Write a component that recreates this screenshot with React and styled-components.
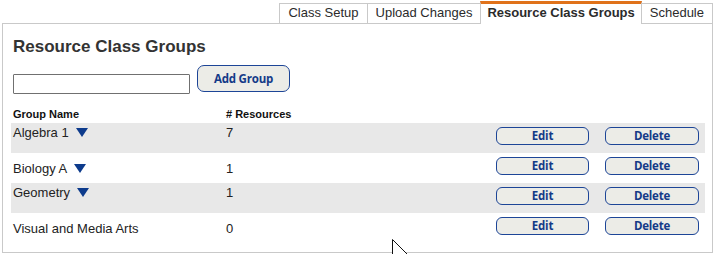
import React from "react";
import styled, { createGlobalStyle } from "styled-components";

const Global = createGlobalStyle`
  html, body { margin: 0; padding: 0; background: #fff; }
  body { font-family: "Liberation Sans", Arial, sans-serif; color: #222; }
  * { box-sizing: border-box; }
`;

const Page = styled.div`
  position: relative;
  width: 717px;
  height: 254px;
  overflow: hidden;
  padding: 1px 4px 0 2px;
`;

const TabBar = styled.div`
  display: flex;
  justify-content: flex-end;
  align-items: flex-end;
  height: 23px;
  margin-bottom: -1px;
  position: relative;
  z-index: 1;
`;

const Tab = styled.div`
  height: ${(p) => (p.$active ? "23px" : "21px")};
  margin-left: -1px;
  padding: 0 ${(p) => (p.$active ? "6px" : "8px")};
  border: 1px solid #c9c9c9;
  border-top: ${(p) => (p.$active ? "3px solid #e0721a" : "1px solid #c9c9c9")};
  border-bottom: ${(p) => (p.$active ? "none" : "1px solid #c9c9c9")};
  background: #fff;
  font-size: 13px;
  font-weight: ${(p) => (p.$active ? 700 : 400)};
  color: #2b2b2b;
  line-height: ${(p) => (p.$active ? "17px" : "18px")};
  white-space: nowrap;
`;

const Panel = styled.div`
  border: 1px solid #c9c9c9;
  height: 230px;
  padding: 13px 7px 0 8px;
`;

const Heading = styled.h2`
  margin: 0 0 0 2px;
  font-size: 17px;
  line-height: 20px;
  font-weight: 700;
  color: #333;
`;

const AddRow = styled.div`
  display: flex;
  align-items: flex-start;
  margin-top: 8px;
  height: 29px;
`;

const TextInput = styled.input`
  width: 177px;
  height: 20px;
  margin: 9px 0 0 2px;
  border: 1px solid #707070;
  border-radius: 1px;
  background: #fff;
  padding: 0 3px;
  font: 13px "Liberation Sans", Arial, sans-serif;
`;

const Button = styled.button`
  width: ${(p) => p.$w || 93}px;
  height: ${(p) => p.$h || 18}px;
  margin-left: ${(p) => p.$ml || 0}px;
  margin-top: ${(p) => p.$mt || 0}px;
  border: 1px solid #1d4597;
  border-radius: ${(p) => (p.$h > 20 ? 7 : 6)}px;
  background: #ecece7;
  color: #143a88;
  font-family: "Open Sans", "Noto Sans", sans-serif;
  font-weight: 700;
  font-size: 11.5px;
  line-height: 1;
  padding: 0;
  letter-spacing: -0.2px;
  justify-self: ${(p) => (p.$end ? "end" : "start")};
  align-self: start;
  cursor: pointer;
`;

const Grid = styled.div`
  display: grid;
  grid-template-columns: 213px 272px 93px 110px;
  padding-right: 6px;
`;

const HeadRow = styled(Grid)`
  margin-top: 14px;
  height: 15px;
  font-size: 11px;
  font-weight: 700;
  line-height: 13px;
  color: #111;
`;

const HeadCell = styled.div`
  padding-left: 2px;
`;

const Row = styled(Grid)`
  height: 30px;
  background: ${(p) => (p.$shaded ? "#e8e8e8" : "#fff")};
  align-items: ${(p) => (p.$shaded ? "start" : "center")};
`;

const Cell = styled.div`
  padding: ${(p) => (p.$shaded ? "2px" : "0")} 0 0 2px;
  font-size: 13px;
  line-height: 15px;
  color: #222;
  white-space: nowrap;
`;

const Arrow = styled.svg`
  margin-left: 7px;
  vertical-align: 0px;
`;

const Cursor = styled.svg`
  position: absolute;
  left: 391px;
  top: 238px;
`;

const groups = [
  { name: "Algebra 1", count: 7, menu: true },
  { name: "Biology A", count: 1, menu: true },
  { name: "Geometry", count: 1, menu: true },
  { name: "Visual and Media Arts", count: 0, menu: false },
];

const tabs = ["Class Setup", "Upload Changes", "Resource Class Groups", "Schedule"];

export default function App() {
  return (
    <>
      <Global />
      <Page>
        <TabBar>
          {tabs.map((t) => (
            <Tab key={t} $active={t === "Resource Class Groups"}>
              {t}
            </Tab>
          ))}
        </TabBar>
        <Panel>
          <Heading>Resource Class Groups</Heading>
          <AddRow>
            <TextInput type="text" />
            <Button $w={93} $h={27} $ml={7}>Add Group</Button>
          </AddRow>
          <HeadRow>
            <HeadCell>Group Name</HeadCell>
            <HeadCell># Resources</HeadCell>
          </HeadRow>
          {groups.map((g, i) => {
            const shaded = i % 2 === 0;
            return (
              <Row key={g.name} $shaded={shaded}>
                <Cell $shaded={shaded}>
                  {g.name}
                  {g.menu && (
                    <Arrow width="12" height="9" viewBox="0 0 12 9">
                      <path d="M0 0 H12 L6 9 Z" fill="#0d3b8c" />
                    </Arrow>
                  )}
                </Cell>
                <Cell $shaded={shaded}>{g.count}</Cell>
                <Button $mt={4}>Edit</Button>
                <Button $w={94} $mt={4} $end>Delete</Button>
              </Row>
            );
          })}
        </Panel>
        <Cursor width="20" height="28" viewBox="0 0 20 28">
          <path
            d="M1.5 1.5 V22 L6 17.5 L9.5 25.5 L12.5 24 L9 16.5 H16.5 Z"
            fill="#fff"
            stroke="#111"
            strokeWidth="1"
            strokeLinejoin="miter"
          />
        </Cursor>
      </Page>
    </>
  );
}
